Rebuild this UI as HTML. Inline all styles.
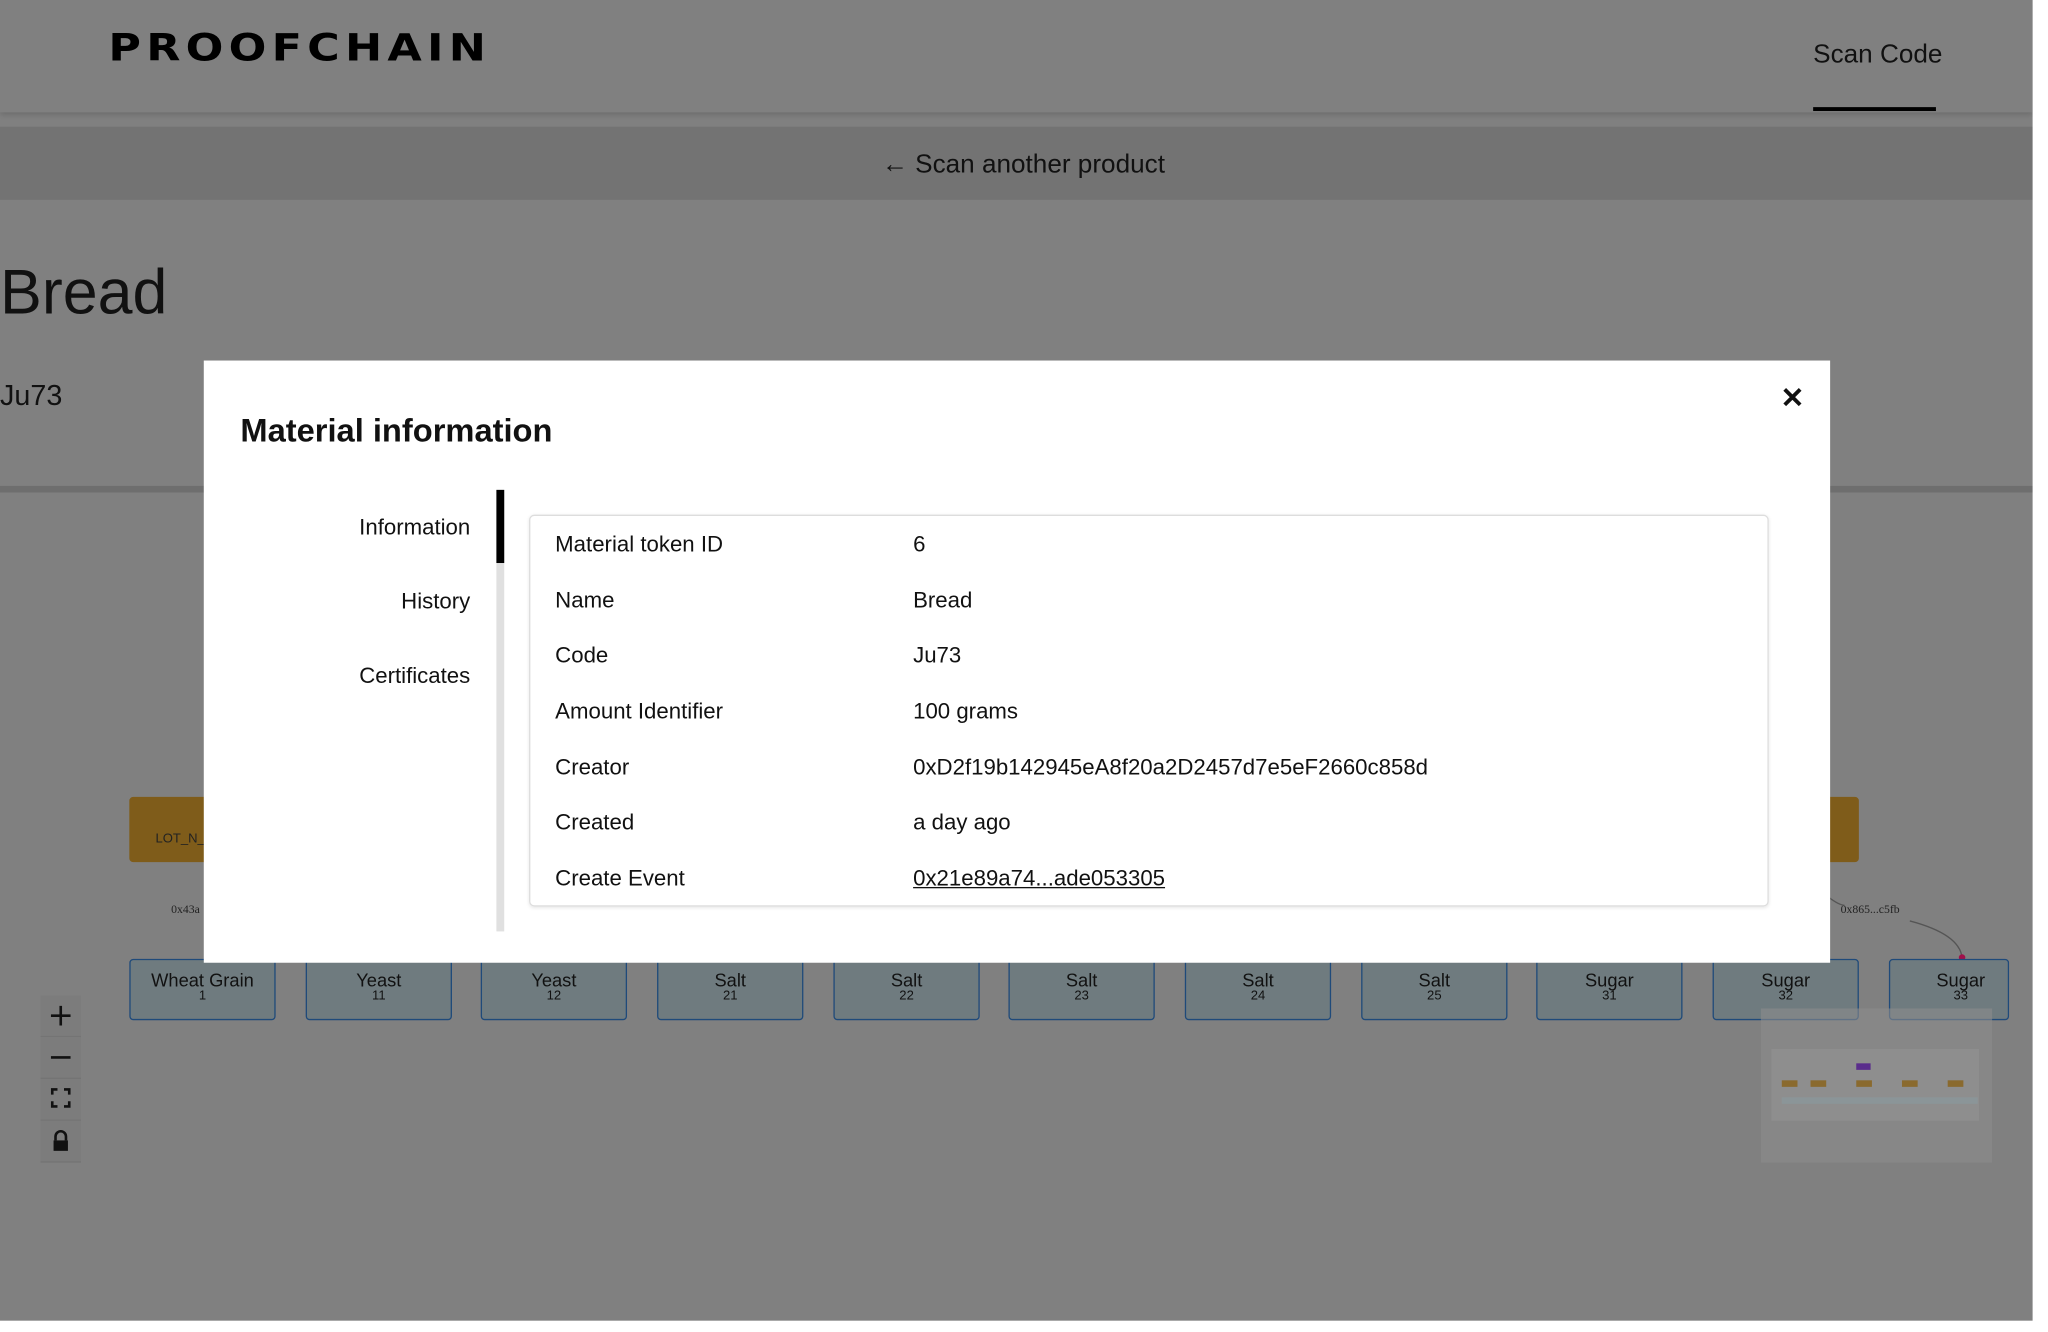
<!DOCTYPE html>
<html><head><meta charset="utf-8"><style>
html,body{margin:0;padding:0;background:#fff;width:2048px;height:1332px;overflow:hidden;font-family:"Liberation Sans",sans-serif;}
#s{position:absolute;left:0;top:0;width:1568px;height:1020px;transform:scale(1.3063);transform-origin:0 0;}
#pg{position:absolute;left:0;top:0;width:1556px;height:1011px;background:#808080;overflow:hidden;}
.a{position:absolute;}
.node{position:absolute;top:734px;background:#6f7b7f;border:1.5px solid #1f4a7a;border-radius:3px;text-align:center;color:#111;font-size:14px;line-height:15px;padding-top:8px;box-sizing:border-box;height:47px;width:112px;}
.node small{display:block;font-size:10px;line-height:9px;}
.ctl{position:absolute;left:31px;width:31px;height:31px;background:#7c7c7c;border-bottom:1px solid #747474;}
.row{position:absolute;left:19px;font-size:17px;color:#111;}
.row span{position:absolute;left:274px;white-space:nowrap;}
</style></head><body><div id="s"><div id="pg">
<div class="a" style="left:0;top:0;width:1556px;height:86px;background:#808080;box-shadow:0 2px 4px rgba(0,0,0,.15)"></div>
<div class="a" style="left:83px;top:20px;font-size:34px;font-weight:bold;letter-spacing:4px;color:#000;font-family:'DejaVu Sans',sans-serif;transform:scaleY(0.85);transform-origin:0 0">PROOFCHAIN</div>
<div class="a" style="left:1388px;top:31px;font-size:20px;color:#111">Scan Code</div>
<div class="a" style="left:1388px;top:82px;width:94px;height:3px;background:#000"></div>
<div class="a" style="left:0;top:97px;width:1556px;height:56px;background:#737373"></div>
<div class="a" style="left:675px;top:115px;font-size:20px;color:#111">← Scan another product</div>
<div class="a" style="left:0;top:197px;font-size:48px;color:#111">Bread</div>
<div class="a" style="left:0;top:290px;font-size:22px;color:#111">Ju73</div>
<div class="a" style="left:0;top:372px;width:1556px;height:5px;background:#6e6e6e"></div>
<div class="a" style="left:99px;top:610px;width:60px;height:50px;background:#7f5c1a;border-radius:3px"></div>
<div class="a" style="left:1395px;top:610px;width:28px;height:50px;background:#7f5c1a;border-radius:3px"></div>
<div class="a" style="left:119px;top:637px;font-size:10px;color:#222">LOT_N_7</div>
<div class="a" style="left:131px;top:691px;font-size:9px;color:#222;font-family:'Liberation Serif',serif">0x43a</div>
<div class="a" style="left:1409px;top:691px;font-size:9px;color:#222;font-family:'Liberation Serif',serif">0x865...c5fb</div>
<svg class="a" style="left:1400px;top:685px" width="110" height="55"><path d="M0 2 Q8 8 12 8 M62 20 Q100 30 102 48" stroke="#555" fill="none"/><circle cx="102" cy="48" r="2.5" fill="#a0104a"/></svg>
<div class="node" style="left:99px">Wheat Grain<small>1</small></div>
<div class="node" style="left:234px">Yeast<small>11</small></div>
<div class="node" style="left:368px">Yeast<small>12</small></div>
<div class="node" style="left:503px">Salt<small>21</small></div>
<div class="node" style="left:638px">Salt<small>22</small></div>
<div class="node" style="left:772px">Salt<small>23</small></div>
<div class="node" style="left:907px">Salt<small>24</small></div>
<div class="node" style="left:1042px">Salt<small>25</small></div>
<div class="node" style="left:1176px">Sugar<small>31</small></div>
<div class="node" style="left:1311px">Sugar<small>32</small></div>
<div class="node" style="left:1446px;width:92px;padding-left:18px">Sugar<small>33</small></div>
<div class="a" style="left:1348px;top:772px;width:177px;height:118px;background:rgba(140,140,140,.6)"></div>
<div class="a" style="left:1356px;top:803px;width:159px;height:55px;background:#8e8e8e"></div>
<div class="a" style="left:1421px;top:814px;width:11px;height:5px;background:#5a2d8c"></div>
<div class="a" style="left:1364px;top:827px;width:12px;height:5px;background:#8a6a2e;box-shadow:22px 0 #8a6a2e,57px 0 #8a6a2e,92px 0 #8a6a2e,127px 0 #8a6a2e"></div>
<div class="a" style="left:1364px;top:840px;width:150px;height:5px;background:#8b9598"></div>
<div class="ctl" style="top:762px"></div><div class="ctl" style="top:794px"></div><div class="ctl" style="top:826px"></div><div class="ctl" style="top:858px"></div>
<svg class="a" style="left:31px;top:762px" width="31" height="128" fill="none" stroke="#111" stroke-width="2">
<path d="M15.5 8v15M8 15.5h15"/><path d="M8 47.5h15"/>
<path d="M9 76v-4h4M18 72h4v4M22 81v4h-4M13 85h-4v-4"/>
<path d="M11.5 111v-3a4 4 0 0 1 8 0v3"/><rect x="10" y="111" width="11" height="8" fill="#111" stroke="none"/>
</svg>
</div>
<div class="a" style="left:156px;top:276px;width:1245px;height:461px;background:#fff">
<div class="a" style="left:1207px;top:16px;font-size:22px;font-weight:bold;color:#111">✕</div>
<div class="a" style="left:28px;top:40px;font-size:25px;font-weight:bold;color:#111">Material information</div>
<div class="a" style="left:0;top:118px;width:204px;text-align:right;font-size:17px;color:#111">Information</div>
<div class="a" style="left:0;top:175px;width:204px;text-align:right;font-size:17px;color:#111">History</div>
<div class="a" style="left:0;top:232px;width:204px;text-align:right;font-size:17px;color:#111">Certificates</div>
<div class="a" style="left:224px;top:99px;width:6px;height:338px;background:#e0e0e0"></div>
<div class="a" style="left:224px;top:99px;width:6px;height:56px;background:#000"></div>
<div class="a" style="left:249px;top:118px;width:947px;height:298px;border:1px solid #ddd;border-radius:4px;box-shadow:0 1px 3px rgba(0,0,0,.1)">
<div class="row" style="top:12px">Material token ID<span>6</span></div>
<div class="row" style="top:55px">Name<span>Bread</span></div>
<div class="row" style="top:97px">Code<span>Ju73</span></div>
<div class="row" style="top:140px">Amount Identifier<span>100 grams</span></div>
<div class="row" style="top:183px">Creator<span>0xD2f19b142945eA8f20a2D2457d7e5eF2660c858d</span></div>
<div class="row" style="top:225px">Created<span>a day ago</span></div>
<div class="row" style="top:268px">Create Event<span style="text-decoration:underline">0x21e89a74...ade053305</span></div>
</div>
</div>
</div></body></html>
